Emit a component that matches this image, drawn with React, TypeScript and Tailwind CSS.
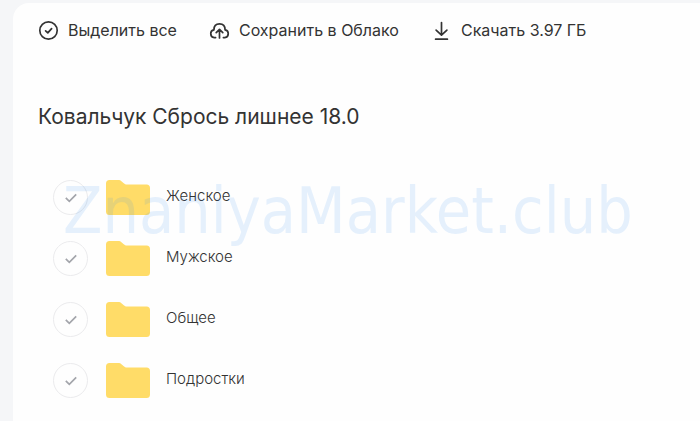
import { useState, type ReactNode } from "react";

const FOLDERS = ["Женское", "Мужское", "Общее", "Подростки"];

export default function App() {
  const [selected, setSelected] = useState<string[]>([]);

  function toggle(name: string) {
    setSelected((prev) => (prev.includes(name) ? prev.filter((n) => n !== name) : [...prev, name]));
  }

  function toggleAll() {
    setSelected((prev) => (prev.length === FOLDERS.length ? [] : FOLDERS));
  }

  return (
    <div className="min-h-screen bg-[#f5f6f8] pl-[13px] pt-[3px] font-['Inter',sans-serif] text-[#333]">
      <main className="relative min-h-[calc(100vh-3px)] overflow-hidden rounded-tl-2xl bg-[#fefefe] pl-[25px] pt-[15px]">
        {/* Toolbar */}
        <div className="flex items-center gap-8">
          <ToolbarButton label="Выделить все" onClick={toggleAll}>
            <SelectAllIcon />
          </ToolbarButton>
          <ToolbarButton label="Сохранить в Облако">
            <CloudIcon />
          </ToolbarButton>
          <ToolbarButton label="Скачать 3.97 ГБ">
            <DownloadIcon />
          </ToolbarButton>
        </div>

        <h1 className="mt-[59px] text-[21px] leading-8">Ковальчук Сбрось лишнее 18.0</h1>

        {/* Folder list */}
        <ul className="mt-[34px] pl-[15px]">
          {FOLDERS.map((name) => (
            <FolderRow
              key={name}
              name={name}
              checked={selected.includes(name)}
              onToggle={() => toggle(name)}
            />
          ))}
        </ul>

        <div className="pointer-events-none absolute inset-x-0 top-[168px] select-none whitespace-nowrap pl-[50px] font-['DejaVu_Sans_Condensed','Noto_Sans',sans-serif] text-[64px] leading-[80px] text-[#348cf0]/12">
          ZnaniyaMarket.club
        </div>
      </main>
    </div>
  );
}

function ToolbarButton({
  label,
  onClick,
  children,
}: {
  label: string;
  onClick?: () => void;
  children: ReactNode;
}) {
  return (
    <button type="button" onClick={onClick} className="flex cursor-pointer items-center gap-2 text-base leading-6">
      {children}
      {label}
    </button>
  );
}

function FolderRow({
  name,
  checked,
  onToggle,
}: {
  name: string;
  checked: boolean;
  onToggle: () => void;
}) {
  return (
    <li className="flex h-[61px] items-center">
      <label className="relative flex size-[35px] cursor-pointer items-center justify-center">
        <input
          type="checkbox"
          aria-label={name}
          checked={checked}
          onChange={onToggle}
          className="absolute inset-0 cursor-pointer appearance-none rounded-full border border-[#ebebed] checked:border-[#005bff]"
        />
        <svg
          viewBox="0 0 12 10"
          className="pointer-events-none relative h-[10px] w-3"
          fill="none"
          stroke={checked ? "#005bff" : "#a3a5ab"}
          strokeWidth="1.7"
        >
          <path d="M.8 4.8 4.3 8.3 11.2 1.4" />
        </svg>
      </label>
      <a href="#" className="flex items-center text-[15px] font-light leading-5">
        <svg viewBox="0 0 44 35" className="ml-[18px] h-[35px] w-11" fill="#ffdc68">
          <path d="M3.5 0H12C13.6 0 14.6 .4 15.7 1.4L17.8 3.2C18.8 4.1 19.6 4.5 21 4.5H40.5A3.5 3.5 0 0 1 44 8V31.5A3.5 3.5 0 0 1 40.5 35H3.5A3.5 3.5 0 0 1 0 31.5V3.5A3.5 3.5 0 0 1 3.5 0Z" />
        </svg>
        <span className="ml-4 pb-1">{name}</span>
      </a>
    </li>
  );
}

function SelectAllIcon() {
  return (
    <svg viewBox="0 0 22 22" className="size-[22px]" fill="none" stroke="#333" strokeWidth="1.7">
      <circle cx="10.5" cy="11.5" r="8.7" />
      <path d="m7.6 11.8 2.2 2.1 3.8-4.3" strokeLinecap="round" strokeLinejoin="round" />
    </svg>
  );
}

function CloudIcon() {
  return (
    <svg
      viewBox="0 0 22 22"
      className="size-[22px]"
      fill="none"
      stroke="#333"
      strokeWidth="1.7"
      strokeLinecap="round"
      strokeLinejoin="round"
    >
      <path d="M6.6 18.6H5.2A3.9 3.9 0 0 1 4.9 10.9C4.9 7.2 7 4.9 10.5 4.9S16.1 7.2 16.1 10.9A3.9 3.9 0 0 1 15.8 18.6H14.4" />
      <path d="M10.5 19V10.6M7.2 13.6l3.3-3.3 3.3 3.3" />
    </svg>
  );
}

function DownloadIcon() {
  return (
    <svg
      viewBox="0 0 22 22"
      className="size-[22px]"
      fill="none"
      stroke="#333"
      strokeWidth="1.7"
      strokeLinecap="round"
      strokeLinejoin="round"
    >
      <path d="M10.5 3.6v12.4M5.1 11.2l5.4 5 5.4-5M4.6 20.2h11.8" />
    </svg>
  );
}
